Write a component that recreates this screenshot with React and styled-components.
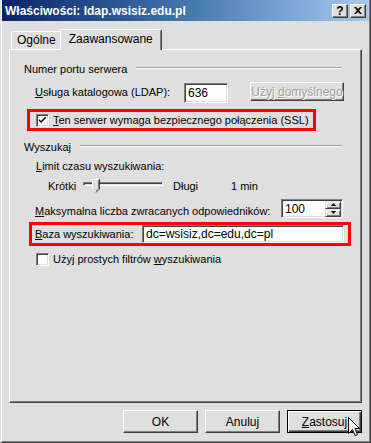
import React from 'react';
import styled, { createGlobalStyle } from 'styled-components';

const GlobalStyle = createGlobalStyle`
  html, body {
    margin: 0;
    padding: 0;
    background: #dfdfdf;
  }
  body {
    font-family: "Liberation Sans", Arial, sans-serif;
    font-size: 11px;
    color: #000;
  }
`;

const Window = styled.div`
  box-sizing: border-box;
  width: 371px;
  height: 443px;
  display: flex;
  flex-direction: column;
  background: #dfdfdf;
  border-left: 1px solid #dfdfdf;
  border-right: 1px solid #404040;
  border-bottom: 1px solid #404040;
  box-shadow: inset 1px 0 #fff, inset -1px -1px #808080;
  padding: 0 1px 1px 1px;
`;

const TitleBar = styled.div`
  height: 21px;
  flex: none;
  display: flex;
  align-items: center;
  justify-content: space-between;
  padding: 0 3px 0 3px;
  background: linear-gradient(to right, #0a246a 0%, #3a6ea5 45%, #a6caf0 100%);
`;

const TitleText = styled.span`
  color: #fff;
  font-weight: bold;
  font-size: 12px;
  white-space: nowrap;
`;

const CaptionButtons = styled.div`
  display: flex;
  gap: 2px;
`;

const CaptionButton = styled.div`
  box-sizing: border-box;
  width: 16px;
  height: 14px;
  display: flex;
  align-items: center;
  justify-content: center;
  background: #dfdfdf;
  border-top: 1px solid #fff;
  border-left: 1px solid #fff;
  border-right: 1px solid #404040;
  border-bottom: 1px solid #404040;
  box-shadow: inset -1px -1px #808080;
  font-weight: bold;
  font-size: 12px;
  line-height: 12px;
`;

const Body = styled.div`
  flex: 1;
  display: flex;
  flex-direction: column;
  padding: 8px 7px 8px 7px;
`;

const TabStrip = styled.div`
  height: 20px;
  display: flex;
  align-items: flex-end;
  padding-left: 2px;
  position: relative;
  z-index: 1;
`;

const Tab = styled.div`
  box-sizing: border-box;
  height: ${({ $active }) => ($active ? '21px' : '18px')};
  margin-bottom: ${({ $active }) => ($active ? '-1px' : '0')};
  margin-left: ${({ $active }) => ($active ? '-2px' : '0')};
  padding: ${({ $active }) => ($active ? '2px 8px 0 8px' : '1px 5px 0 5px')};
  display: flex;
  align-items: flex-start;
  background: #dfdfdf;
  border-top: 1px solid #fff;
  border-left: 1px solid #fff;
  border-right: 1px solid #404040;
  border-radius: 2px 2px 0 0;
  box-shadow: inset -1px 0 #808080;
  font-size: 12px;
  line-height: 14px;
  white-space: nowrap;
`;

const Panel = styled.div`
  flex: 1;
  box-sizing: border-box;
  border-top: 1px solid #fff;
  border-left: 1px solid #fff;
  border-right: 1px solid #404040;
  border-bottom: 1px solid #404040;
  box-shadow: inset -1px -1px #808080;
  padding: 13px 18px 0 14px;
  display: flex;
  flex-direction: column;
  align-items: flex-start;
`;

const GroupHeader = styled.div`
  width: 318px;
  height: 13px;
  margin-top: ${({ $mt }) => $mt || 0}px;
  display: flex;
  align-items: flex-start;
  line-height: 13px;
  white-space: nowrap;
`;

const Rule = styled.div`
  flex: 1;
  margin: 4px 0 0 9px;
  border-top: 1px solid #a0a0a0;
  border-bottom: 1px solid #fff;
`;

const Row = styled.div`
  display: flex;
  align-items: flex-start;
  margin-top: ${({ $mt }) => $mt || 0}px;
  margin-left: ${({ $ml }) => $ml || 0}px;
  height: ${({ $h }) => $h}px;
  white-space: nowrap;
`;

const Label = styled.span`
  width: ${({ $w }) => ($w ? `${$w}px` : 'auto')};
  flex: none;
  margin-top: ${({ $mt }) => $mt || 0}px;
  margin-left: ${({ $ml }) => $ml || 0}px;
  line-height: 13px;
`;

const Key = styled.span`
  text-decoration: underline;
  text-underline-offset: 1px;
`;

const TextField = styled.div`
  box-sizing: border-box;
  width: ${({ $w }) => $w}px;
  height: ${({ $h }) => $h || 20}px;
  margin-top: ${({ $mt }) => $mt || 0}px;
  flex: none;
  position: relative;
  background: #fff;
  border-top: 1px solid #808080;
  border-left: 1px solid #808080;
  border-right: 1px solid #fff;
  border-bottom: 1px solid #fff;
  box-shadow: inset 1px 1px #404040, inset -1px -1px #dfdfdf;
  padding: 0 3px;
  display: flex;
  align-items: center;
  font-size: 12px;
`;

const Button = styled.div`
  box-sizing: border-box;
  width: ${({ $w }) => $w || 75}px;
  height: ${({ $h }) => $h || 23}px;
  margin-left: ${({ $ml }) => $ml || 0}px;
  flex: none;
  position: relative;
  display: flex;
  align-items: center;
  justify-content: center;
  background: #dfdfdf;
  border: 1px solid;
  border-color: ${({ $default }) => ($default ? '#000' : '#fff #404040 #404040 #fff')};
  box-shadow: ${({ $default }) =>
    $default
      ? 'inset 1px 1px #fff, inset -1px -1px #404040, inset -2px -2px #808080'
      : 'inset -1px -1px #808080'};
  color: ${({ $disabled }) => ($disabled ? '#a0a0a0' : '#000')};
  text-shadow: ${({ $disabled }) => ($disabled ? '1px 1px #fff' : 'none')};
  font-size: 12px;
  white-space: nowrap;
`;

const Highlight = styled.div`
  box-sizing: border-box;
  width: ${({ $w }) => $w}px;
  height: ${({ $h }) => $h}px;
  margin-top: ${({ $mt }) => $mt}px;
  margin-left: ${({ $ml }) => $ml}px;
  border: 3px solid #ff0000;
  display: flex;
  align-items: flex-start;
  padding-left: ${({ $pl }) => $pl}px;
  padding-top: ${({ $pt }) => $pt || 0}px;
  white-space: nowrap;
`;

const CheckBox = styled.div`
  box-sizing: border-box;
  width: 13px;
  height: 13px;
  flex: none;
  background: #fff;
  border-top: 1px solid #808080;
  border-left: 1px solid #808080;
  border-right: 1px solid #fff;
  border-bottom: 1px solid #fff;
  box-shadow: inset 1px 1px #404040, inset -1px -1px #dfdfdf;
  display: flex;
  align-items: center;
  justify-content: center;
  margin-right: 4px;
`;

const SliderBox = styled.div`
  position: relative;
  width: 80px;
  height: 15px;
  flex: none;
`;

const Track = styled.div`
  box-sizing: border-box;
  margin-top: 4px;
  height: 4px;
  border-top: 1px solid #808080;
  border-left: 1px solid #808080;
  border-right: 1px solid #fff;
  border-bottom: 1px solid #fff;
  box-shadow: inset 1px 1px #404040;
`;

const Thumb = styled.svg`
  position: absolute;
  left: 9px;
  top: 1px;
`;

const SpinField = styled(TextField)`
  padding-right: 0;
  justify-content: space-between;
`;

const SpinButtons = styled.div`
  display: flex;
  flex-direction: column;
  margin-right: 1px;
`;

const SpinButton = styled.div`
  box-sizing: border-box;
  width: 16px;
  height: 8px;
  background: #dfdfdf;
  border-top: 1px solid #dfdfdf;
  border-left: 1px solid #dfdfdf;
  border-right: 1px solid #404040;
  border-bottom: 1px solid #404040;
  box-shadow: inset 1px 1px #fff, inset -1px -1px #808080;
  display: flex;
  align-items: center;
  justify-content: center;
`;

const ButtonBar = styled.div`
  margin-top: 7px;
  display: flex;
  justify-content: flex-end;
  gap: 7px;
`;

const Cursor = styled.svg`
  position: absolute;
  left: 60px;
  top: 6px;
`;

const CheckMark = () => (
  <svg width="7" height="7" viewBox="0 0 7 7">
    <path d="M0 2 L0 4 L2 6 L7 1 L7 -1 L2 4 Z" fill="#000" />
  </svg>
);

const App = () => (
  <>
    <GlobalStyle />
    <Window>
      <TitleBar>
        <TitleText>Właściwości: ldap.wsisiz.edu.pl</TitleText>
        <CaptionButtons>
          <CaptionButton>?</CaptionButton>
          <CaptionButton>
            <svg width="8" height="7" viewBox="0 0 8 7">
              <path d="M0 0 H2 L4 2 L6 0 H8 L5 3.5 L8 7 H6 L4 5 L2 7 H0 L3 3.5 Z" fill="#000" />
            </svg>
          </CaptionButton>
        </CaptionButtons>
      </TitleBar>
      <Body>
        <TabStrip>
          <Tab>Ogólne</Tab>
          <Tab $active>Zaawansowane</Tab>
        </TabStrip>
        <Panel>
          <GroupHeader>
            Numer portu serwera
            <Rule />
          </GroupHeader>
          <Row $mt={6} $ml={11} $h={21}>
            <Label $w={149} $mt={4}>
              <Key>U</Key>sługa katalogowa (LDAP):
            </Label>
            <TextField $w={44} $mt={1}>636</TextField>
            <Button $w={94} $h={19} $ml={22} $disabled>
              <span>Użyj <Key>d</Key>omyślnego</span>
            </Button>
          </Row>
          <Highlight $w={289} $h={22} $mt={6} $ml={3} $pl={6} $pt={2}>
            <CheckBox>
              <CheckMark />
            </CheckBox>
            <Label>
              <Key>T</Key>en serwer wymaga bezpiecznego połączenia (SSL)
            </Label>
          </Highlight>
          <GroupHeader $mt={10}>
            Wyszukaj
            <Rule />
          </GroupHeader>
          <Row $mt={6} $ml={12} $h={13}>
            <Label>
              <Key>L</Key>imit czasu wyszukiwania:
            </Label>
          </Row>
          <Row $mt={5} $ml={24} $h={15}>
            <Label $w={35} $mt={2}>Krótki</Label>
            <SliderBox>
              <Track />
              <Thumb width="8" height="14" viewBox="0 0 8 14">
                <path d="M0 0 H8 V10 L4 14 L0 10 Z" fill="#dfdfdf" />
                <path d="M0.5 10 V0.5 H7" stroke="#fff" fill="none" />
                <path d="M7.5 0 V10 L4 13.5" stroke="#404040" fill="none" />
                <path d="M6.5 1 V9.5 L4 12" stroke="#808080" fill="none" />
              </Thumb>
            </SliderBox>
            <Label $w={58} $mt={2} $ml={10}>Długi</Label>
            <Label $mt={2}>1 min</Label>
          </Row>
          <Row $mt={6} $ml={11} $h={19}>
            <Label $w={246} $mt={6}>
              <Key>M</Key>aksymalna liczba zwracanych odpowiedników:
            </Label>
            <SpinField $w={62} $h={19}>
              <span>100</span>
              <SpinButtons>
                <SpinButton>
                  <svg width="5" height="3" viewBox="0 0 5 3"><path d="M2.5 0 L5 3 H0 Z" fill="#000" /></svg>
                </SpinButton>
                <SpinButton>
                  <svg width="5" height="3" viewBox="0 0 5 3"><path d="M0 0 H5 L2.5 3 Z" fill="#000" /></svg>
                </SpinButton>
              </SpinButtons>
            </SpinField>
          </Row>
          <Highlight $w={322} $h={24} $mt={4} $ml={5} $pl={3}>
            <Label $w={107} $mt={3}>
              <Key>B</Key>aza wyszukiwania:
            </Label>
            <TextField $w={202} $h={18}>dc=wsisiz,dc=edu,dc=pl</TextField>
          </Highlight>
          <Row $mt={7} $ml={12} $h={13}>
            <CheckBox />
            <Label>
              Użyj prostych filtrów <Key>w</Key>yszukiwania
            </Label>
          </Row>
        </Panel>
        <ButtonBar>
          <Button>OK</Button>
          <Button>Anuluj</Button>
          <Button $default>
            <span><Key>Z</Key>astosuj</span>
            <Cursor width="12" height="20" viewBox="0 0 12 20">
              <path d="M0.5 0.5 V16.5 L4.5 12.5 L7 18.5 L9.5 17.5 L7 11.5 H11.5 Z" fill="#fff" stroke="#000" strokeWidth="1" />
            </Cursor>
          </Button>
        </ButtonBar>
      </Body>
    </Window>
  </>
);

export default App;
